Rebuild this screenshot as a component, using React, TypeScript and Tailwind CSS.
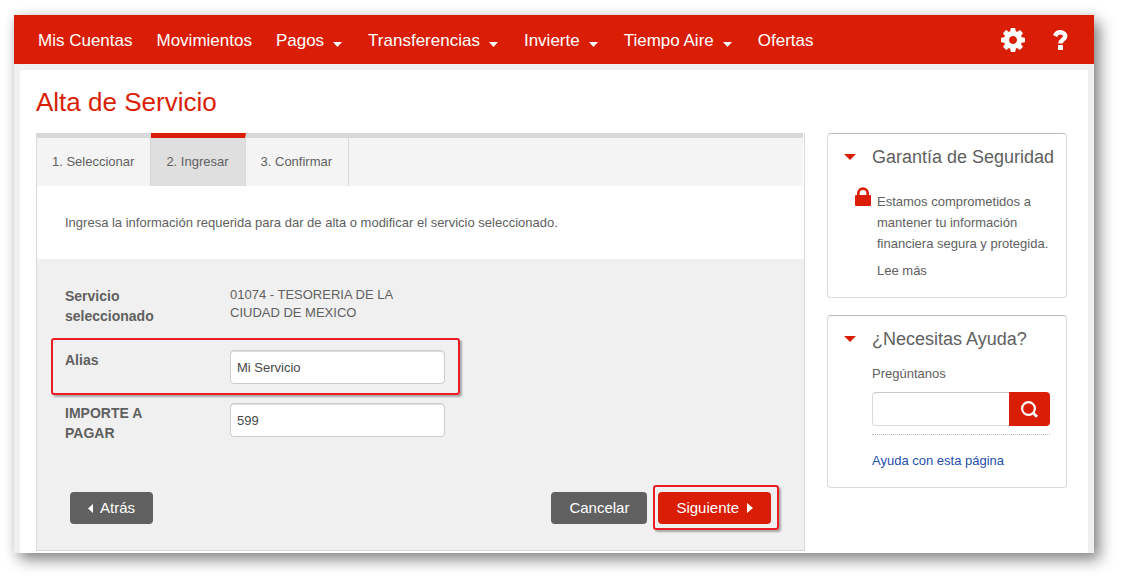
import { useState } from "react";

type NavItem = { label: string; menu?: boolean };

const NAV: NavItem[] = [
  { label: "Mis Cuentas" },
  { label: "Movimientos" },
  { label: "Pagos", menu: true },
  { label: "Transferencias", menu: true },
  { label: "Invierte", menu: true },
  { label: "Tiempo Aire", menu: true },
  { label: "Ofertas" },
];

const STEPS = ["1. Seleccionar", "2. Ingresar", "3. Confirmar"];

function CaretDown({ className }: { className: string }) {
  return (
    <svg viewBox="0 0 10 5" preserveAspectRatio="none" className={className} fill="currentColor" aria-hidden="true">
      <path d="M0 0h10L5 5z" />
    </svg>
  );
}

function GearIcon() {
  return (
    <svg viewBox="0 128 1536 1536" className="size-6" fill="currentColor" fillRule="evenodd" aria-hidden="true">
      <path d="M1024 896q0 106-75 181t-181 75-181-75-75-181 75-181 181-75 181 75 75 181zm512-109v222q0 12-8 23t-20 13l-185 28q-19 54-39 91 35 50 107 138 10 12 10 25t-9 23q-27 37-99 108t-94 71q-12 0-26-9l-138-108q-44 23-91 38-16 136-29 186-7 28-36 28h-222q-14 0-24.5-8.5t-11.5-21.5l-28-184q-49-16-90-37l-141 107q-10 9-25 9-14 0-25-11-126-114-165-168-7-10-7-23 0-12 8-23 15-21 51-66.5t54-70.5q-27-50-41-99l-183-27q-13-2-21-12.5t-8-23.5v-222q0-12 8-23t19-13l186-28q14-46 39-92-40-57-107-138-10-12-10-24 0-10 9-23 26-36 98.500-107.500t94.500-71.500q13 0 26 10l138 107q44-23 91-38 16-136 29-186 7-28 36-28h222q14 0 24.500 8.500t11.500 21.500l28 184q49 16 90 37l142-107q9-9 24-9 13 0 25 10 129 119 165 170 7 8 7 22 0 12-8 23-15 21-51 66.500t-54 70.500q26 50 41 98l183 28q13 2 21 12.500t8 23.500z" />
    </svg>
  );
}

function HelpIcon() {
  return (
    <svg viewBox="0 0 15 20" className="h-5 w-[15px]" aria-hidden="true">
      <path
        d="M2 6C3.100 3.500 4.900 2.300 7.300 2.300c2.900 0 4.900 1.600 4.900 3.900 0 3.300-4.700 3.300-4.700 7.300"
        fill="none"
        stroke="currentColor"
        strokeWidth="4.500"
      />
      <rect x="5" y="15" width="5" height="5" rx="0.600" fill="currentColor" />
    </svg>
  );
}

function LockIcon() {
  return (
    <svg viewBox="0 0 16 19" className="mt-1 h-[19px] w-4 shrink-0 text-[#da1e05]" aria-hidden="true">
      <path d="M3.300 9V6.300a4.700 4.700 0 0 1 9.400 0V9" fill="none" stroke="currentColor" strokeWidth="2.600" />
      <rect x="0" y="8" width="16" height="11" rx="1" fill="currentColor" />
    </svg>
  );
}

function SearchIcon() {
  return (
    <svg viewBox="0 0 17 17" className="size-[17px]" fill="none" stroke="currentColor" aria-hidden="true">
      <circle cx="7.500" cy="7.500" r="6.400" strokeWidth="2.200" />
      <path d="M11.500 11.500l4.600 4.300" strokeWidth="2.800" />
    </svg>
  );
}

function NavBar() {
  return (
    <header className="flex h-[49px] items-center bg-[#da1e05] pr-[26px] pl-6 text-white">
      <nav className="flex flex-1 items-center gap-6 pt-[3px] text-[17px]">
        {NAV.map((item) => (
          <a
            key={item.label}
            href="#"
            className={item.menu ? "mr-[2px] flex items-center gap-[9px]" : "flex items-center"}
          >
            {item.label}
            {item.menu && <CaretDown className="mt-[6px] h-[5px] w-[9px]" />}
          </a>
        ))}
      </nav>
      <div className="flex items-center gap-7">
        <button type="button" aria-label="Configuración">
          <GearIcon />
        </button>
        <button type="button" aria-label="Ayuda">
          <HelpIcon />
        </button>
      </div>
    </header>
  );
}

function Steps() {
  return (
    <ol className="mr-px flex border-t-[5px] border-[#d8d8d8] bg-[#f4f4f4]">
      {STEPS.map((step, i) => (
        <li
          key={step}
          aria-current={i === 1 ? "step" : undefined}
          className={
            i === 1
              ? "-mt-[5px] border-t-[5px] border-r border-t-[#da1e05] border-r-[#d8d8d8] bg-[#dfdfdf] py-[14px] pr-4 pl-[15px] text-[13px] leading-5"
              : "border-r border-[#d8d8d8] py-[14px] pr-4 pl-[15px] text-[13px] leading-5"
          }
        >
          {step}
        </li>
      ))}
    </ol>
  );
}

const inputClass =
  "h-[34px] w-[215px] rounded border border-[#cccccc] bg-white px-[6px] text-[13px] text-[#484848] shadow-[inset_0_1px_0_#dddddd] outline-none";

const highlightClass = "rounded-[3px] border-2 border-[#ec1c24] shadow-[2px_2px_2px_rgba(0,0,0,0.3)]";

function ServiceForm() {
  const [alias, setAlias] = useState("Mi Servicio");
  const [amount, setAmount] = useState("599");
  return (
    <form className="bg-[#f0f0f0] pt-[27px] pb-5" onSubmit={(e) => e.preventDefault()}>
      <div className="flex pl-[28px]">
        <span className="w-[165px] pr-16 text-sm leading-5 font-bold">Servicio seleccionado</span>
        <span className="w-[190px] text-[13px] leading-[18px]">01074 - TESORERIA DE LA CIUDAD DE MEXICO</span>
      </div>
      <div className={`mt-3 ml-[14px] flex w-[409px] pt-[10px] pb-[9px] pl-3 ${highlightClass}`}>
        <label htmlFor="alias" className="w-[165px] text-sm leading-5 font-bold">
          Alias
        </label>
        <input id="alias" value={alias} onChange={(e) => setAlias(e.target.value)} className={inputClass} />
      </div>
      <div className="mt-2 flex pl-[28px]">
        <label htmlFor="importe" className="w-[165px] pr-16 text-sm leading-5 font-bold">
          IMPORTE A PAGAR
        </label>
        <input id="importe" value={amount} onChange={(e) => setAmount(e.target.value)} className={inputClass} />
      </div>
      <div className="mt-[42px] flex items-center pr-[25px] pl-[33px] text-[15px] text-white">
        <button type="button" className="flex h-8 items-center gap-[7px] rounded bg-[#606060] px-[18px] pt-px">
          <svg viewBox="0 0 5 9" className="h-[9px] w-[5px]" fill="currentColor" aria-hidden="true">
            <path d="M5 0v9L0 4.500z" />
          </svg>
          Atrás
        </button>
        <button type="button" className="mr-[6px] ml-auto h-8 rounded bg-[#606060] px-[18px] pt-px">
          Cancelar
        </button>
        <div className={`pt-[5px] pr-[6px] pb-1 pl-[3px] ${highlightClass}`}>
          <button type="submit" className="flex h-8 items-center gap-2 rounded bg-[#da1e05] px-[18px]">
            Siguiente
            <svg viewBox="0 0 6 10" className="h-[10px] w-[6px]" fill="currentColor" aria-hidden="true">
              <path d="M0 0v10l6-5z" />
            </svg>
          </button>
        </div>
      </div>
    </form>
  );
}

const cardClass = "rounded border border-[#dadada] border-t-[#bbbbbb] px-4 pt-[11px] pb-4";

function CardTitle({ children }: { children: string }) {
  return (
    <h2 className="flex items-center gap-4 text-lg leading-6 whitespace-nowrap">
      <CaretDown className="h-[6px] w-3 shrink-0 text-[#da1e05]" />
      {children}
    </h2>
  );
}

function Sidebar() {
  const [query, setQuery] = useState("");
  return (
    <aside className="flex w-60 shrink-0 flex-col gap-[17px]">
      <section className={cardClass}>
        <CardTitle>Garantía de Seguridad</CardTitle>
        <div className="mt-[14px] flex gap-[6px] pl-[11px]">
          <LockIcon />
          <div className="text-[13px] whitespace-nowrap">
            <p className="pt-2 leading-[21px]">
              Estamos comprometidos a
              <br />
              mantener tu información
              <br />
              financiera segura y protegida.
            </p>
            <a href="#" className="mt-[7px] block leading-5">
              Lee más
            </a>
          </div>
        </div>
      </section>
      <section className={cardClass}>
        <CardTitle>¿Necesitas Ayuda?</CardTitle>
        <div className="pl-7 text-[13px] leading-5">
          <label htmlFor="pregunta" className="mt-[13px] block">
            Pregúntanos
          </label>
          <div className="mt-2 flex border-b border-dotted border-[#bbbbbb] pb-2">
            <input
              id="pregunta"
              value={query}
              onChange={(e) => setQuery(e.target.value)}
              className="h-[34px] min-w-0 flex-1 rounded-l border border-r-0 border-[#dadada] border-t-[#c8c8c8] px-2 outline-none"
            />
            <button
              type="button"
              aria-label="Buscar"
              className="flex h-[34px] w-[41px] items-center justify-center rounded-r bg-[#da1e05] text-white"
            >
              <SearchIcon />
            </button>
          </div>
          <a href="#" className="mt-4 block text-[#1f50ae]">
            Ayuda con esta página
          </a>
        </div>
      </section>
    </aside>
  );
}

export default function App() {
  return (
    <div className="bg-white pt-[15px] pr-[29px] pb-7 pl-[14px] font-['Liberation_Sans',Arial,sans-serif] text-[#606060]">
      <div className="bg-[#f0f0f0] shadow-[6px_7px_14px_rgba(0,0,0,0.45),0_0_10px_rgba(0,0,0,0.1)]">
        <NavBar />
        <div className="mx-[6px] mt-[6px] bg-white pt-4 pr-[21px] pb-[2px] pl-4">
          <h1 className="text-[26px] leading-8 text-[#da1e05]">Alta de Servicio</h1>
          <div className="mt-[15px] flex items-start gap-[22px]">
            <main className="min-w-0 flex-1 border-x border-b border-[#d8d8d8]">
              <Steps />
              <p className="px-[28px] pt-[27px] pb-[26px] text-[13px] leading-5">
                Ingresa la información requerida para dar de alta o modificar el servicio seleccionado.
              </p>
              <ServiceForm />
            </main>
            <Sidebar />
          </div>
        </div>
      </div>
    </div>
  );
}
